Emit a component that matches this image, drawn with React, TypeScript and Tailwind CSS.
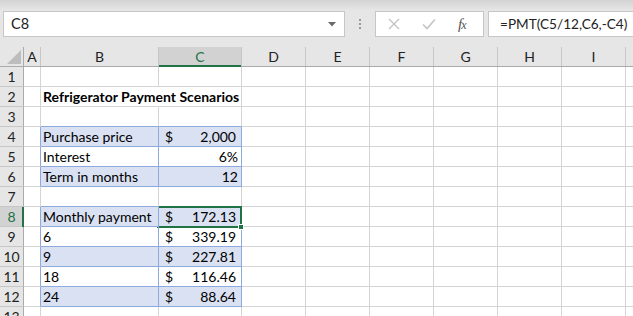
import { ReactNode } from "react";

// column widths incl. right border
const COLS = ["A", "B", "C", "D", "E", "F", "G", "H", "I"];
const colW: Record<string, string> = {
  A: "w-[17px]",
  B: "w-[118px]",
  C: "w-[83px]",
  D: "w-[64px]",
  E: "w-[64px]",
  F: "w-[64px]",
  G: "w-[64px]",
  H: "w-[64px]",
  I: "w-[64px]",
};

const inTable = [4, 5, 6, 8, 9, 10, 11, 12];
const blueRows = [4, 6, 8, 10, 12];
const topOfTable = [3, 7];

type RowData = { b?: string; bold?: boolean; dollar?: boolean; c?: string; pad?: "acct" | "gen" };

const data: Record<number, RowData> = {
  2: { b: "Refrigerator Payment Scenarios", bold: true },
  4: { b: "Purchase price", dollar: true, c: "2,000", pad: "acct" },
  5: { b: "Interest", c: "6%", pad: "gen" },
  6: { b: "Term in months", c: "12", pad: "gen" },
  8: { b: "Monthly payment", dollar: true, c: "172.13", pad: "acct" },
  9: { b: "6", dollar: true, c: "339.19", pad: "acct" },
  10: { b: "9", dollar: true, c: "227.81", pad: "acct" },
  11: { b: "18", dollar: true, c: "116.46", pad: "acct" },
  12: { b: "24", dollar: true, c: "88.64", pad: "acct" },
};

function FormulaBar() {
  return (
    <div className="h-[47px] bg-gradient-to-b from-[#d4d4d4] via-[#e6e6e6] via-[22%] to-[#e6e6e6] flex items-start pt-[11px]">
      <div className="ml-[3px] w-[342px] h-[26px] bg-white border border-[#c6c6c6] flex items-center pl-[7px] pr-[8px] text-[14.5px] text-[#222]">
        <span className="flex-1">C8</span>
        <svg width="8" height="5" viewBox="0 0 8 5">
          <path d="M0 0h8L4 4.5z" fill="#6a6a6a" />
        </svg>
      </div>
      <div className="w-[30px] h-[26px] flex flex-col items-center justify-center gap-[2px]">
        <span className="w-[2px] h-[2px] bg-[#9a9a9a]" />
        <span className="w-[2px] h-[2px] bg-[#9a9a9a]" />
        <span className="w-[2px] h-[2px] bg-[#9a9a9a]" />
      </div>
      <div className="w-[109px] h-[26px] bg-white border border-[#c6c6c6] flex items-center">
        <svg className="ml-[12px]" width="12" height="12" viewBox="0 0 12 12">
          <path d="M1 1l10 10M11 1L1 11" stroke="#c4c4c4" strokeWidth="1.4" />
        </svg>
        <svg className="ml-[22px]" width="14" height="12" viewBox="0 0 14 12">
          <path d="M1 6.5l4 4L13 1.5" stroke="#c4c4c4" strokeWidth="1.6" fill="none" />
        </svg>
        <span className="ml-[22px] text-[15px] italic text-[#555] font-['Liberation_Serif',serif] tracking-[-1px]">
          f<span className="text-[12px]">x</span>
        </span>
      </div>
      <div className="ml-[4px] flex-1 h-[26px] bg-white border border-[#c6c6c6] border-r-0 flex items-center pl-[11px] text-[13.6px] text-[#222] whitespace-nowrap overflow-hidden">
        =PMT(C5/12,C6,-C4)
      </div>
    </div>
  );
}

function HeaderRow() {
  return (
    <div className="flex h-[20px] bg-[#e6e6e6] border-b border-[#ababab] text-[14px] text-[#222]">
      <div className="w-[24px] border-r border-[#ababab] flex items-end justify-end pr-[2px] pb-[2px]">
        <svg width="14" height="14" viewBox="0 0 14 14">
          <path d="M14 0V14H0z" fill="#bdbdbd" />
        </svg>
      </div>
      {COLS.map((c) =>
        c === "C" ? (
          <div key={c} className={`${colW[c]} relative bg-[#d2d2d2] border-r border-[#c6c6c6] flex items-center justify-center text-[#217346]`}>
            {c}
            <span className="absolute left-0 right-0 -bottom-[1px] h-[2px] bg-[#217346]" />
          </div>
        ) : (
          <div key={c} className={`${colW[c]} border-r border-[#c6c6c6] flex items-center justify-center`}>
            {c}
          </div>
        )
      )}
      <div className="flex-1" />
    </div>
  );
}

function Row({ r }: { r: number }) {
  const t = inTable.includes(r);
  const blue = blueRows.includes(r);
  const top = topOfTable.includes(r);
  const d = data[r] ?? {};
  const sel = r === 8;

  const tableCell = (col: "B" | "C", content: ReactNode, extra: string) => (
    <div
      className={[
        colW[col],
        "border-r border-b flex items-end leading-[19px] whitespace-nowrap",
        t || top ? "border-b-[#8ea9db]" : "border-b-[#d4d4d4]",
        t ? "border-r-[#8ea9db]" : r === 2 && col === "B" ? "border-r-transparent" : "border-r-[#d4d4d4]",
        blue ? "bg-[#d9e1f2]" : "",
        extra,
      ].join(" ")}
    >
      {content}
    </div>
  );

  return (
    <div className="flex h-[20px] text-[14px] text-black">
      <div
        className={
          sel
            ? "w-[24px] relative bg-[#d2d2d2] border-r border-b border-[#ababab] border-b-[#c6c6c6] flex items-center justify-center text-[14px] text-[#217346]"
            : "w-[24px] bg-[#e6e6e6] border-r border-b border-[#ababab] border-b-[#c6c6c6] flex items-center justify-center text-[14px] text-[#222]"
        }
      >
        {r}
        {sel && <span className="absolute top-0 bottom-[-1px] -right-[1px] w-[2px] bg-[#217346]" />}
      </div>
      <div className={`${colW.A} border-r border-b border-b-[#d4d4d4] ${t ? "border-r-[#8ea9db]" : "border-r-[#d4d4d4]"}`} />
      {tableCell(
        "B",
        <span className={d.bold ? "font-bold" : ""}>{d.b}</span>,
        "pl-[2px] relative z-10"
      )}
      {tableCell(
        "C",
        <>
          {d.dollar && <span className="ml-[6px]">$</span>}
          <span className="flex-1 text-right">{d.c}</span>
        </>,
        d.pad === "acct" ? "pr-[5px]" : "pr-[3px]"
      )}
      {COLS.slice(3).map((c) => (
        <div key={c} className={`${colW[c]} border-r border-b border-[#d4d4d4]`} />
      ))}
      <div className="flex-1 border-b border-[#d4d4d4]" />
    </div>
  );
}

export default function App() {
  const rows = Array.from({ length: 13 }, (_, i) => i + 1);
  return (
    <div className="w-[633px] h-[316px] overflow-hidden bg-white font-['Lato','Noto_Sans',sans-serif] select-none">
      <FormulaBar />
      <div className="relative">
        <HeaderRow />
        {rows.map((r) => (
          <Row key={r} r={r} />
        ))}
        {/* active cell C8 */}
        <div className="absolute left-[157px] top-[159px] w-[85px] h-[22px] border-2 border-[#217346] pointer-events-none">
          <span className="absolute -right-[4px] -bottom-[4px] w-[6px] h-[6px] bg-[#217346] border border-white" />
        </div>
      </div>
    </div>
  );
}
